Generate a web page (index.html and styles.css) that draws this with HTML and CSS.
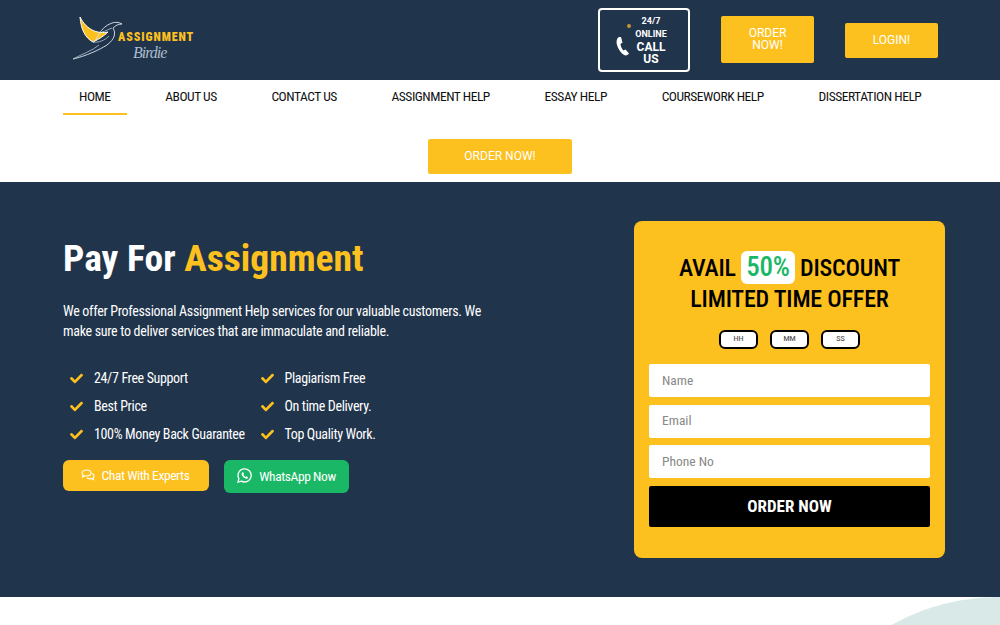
FILE: index.html
```html
<!DOCTYPE html>
<html lang="en">
<head>
    <meta charset="UTF-8">
    <title>Pay For Assignment</title>
    <link rel="stylesheet" href="styles.css">
</head>
<body>
<div class="top-bar">
    <a class="logo" href="#">
        <svg class="logo-bird" width="76" height="50" viewBox="0 0 76 50">
            <path d="M8 5C9 17 13 26 21 30C27 27 32 24 36 20C27 22 15 19 8 5Z" fill="#fdc11f" stroke="#fff" stroke-width="1"/>
            <path d="M1 47C14 44 27 38 35 33C43 27 44 21 41 16C44 13 47 12 50 12C47 10 43 10 40 11C34 13 30 17 27 22C24 28 22 31 21 30" fill="none" stroke="#dfe7ee" stroke-width="0.9"/>
            <path d="M21 30C27 31 33 28 37 24M1 47C10 42 20 39 27 33M30 20C34 19 37 17 40 16" fill="none" stroke="#b9c8d5" stroke-width="0.8"/>
        </svg>
        <span class="logo-text">ASSIGNMENT</span>
        <span class="logo-script">Birdie</span>
    </a>
    <div class="top-actions">
        <a class="call-box" href="#">
            <svg class="call-icon" width="14" height="20" viewBox="0 0 14 20">
                <path d="M3 1C1 2 0 5 1 9C2 13 5 17 8 19C10 20 12 19 13 17.500L9.500 13.500L7.500 14.500C6 13 4.500 10 4.500 8L6.500 6.500L5 1Z" fill="#fff"/>
            </svg>
            <span class="call-text">
                <span class="call-small">24/7</span>
                <span class="call-small">ONLINE</span>
                <span class="call-big">CALL<br>US</span>
            </span>
            <i class="call-dot"></i>
        </a>
        <a class="btn btn-order-top" href="#">ORDER<br>NOW!</a>
        <a class="btn btn-login" href="#">LOGIN!</a>
    </div>
</div>

<div class="nav-wrap">
    <ul class="nav">
        <li class="active"><a href="#">HOME</a></li>
        <li><a href="#">ABOUT US</a></li>
        <li><a href="#">CONTACT US</a></li>
        <li><a href="#">ASSIGNMENT HELP</a></li>
        <li><a href="#">ESSAY HELP</a></li>
        <li><a href="#">COURSEWORK HELP</a></li>
        <li><a href="#">DISSERTATION HELP</a></li>
    </ul>
    <a class="btn btn-order-nav" href="#">ORDER NOW!</a>
</div>

<div class="hero">
    <div class="hero-left">
        <h1>Pay For <span>Assignment</span></h1>
        <p class="intro">We offer Professional Assignment Help services for our valuable customers. We make sure to deliver services that are immaculate and reliable.</p>
        <ul class="checks">
            <li><svg viewBox="0 0 512 512"><path d="M173.900 439.400L7.500 273C-2.500 263-2.500 246.800 7.500 236.800L43.700 200.600C53.700 190.600 69.900 190.600 79.900 200.600L192 312.700L432.100 72.600C442.100 62.600 458.300 62.600 468.300 72.600L504.500 108.800C514.500 118.800 514.500 135 504.500 145L210.100 439.400C200.100 449.400 183.900 449.400 173.900 439.400Z"/></svg>24/7 Free Support</li>
            <li><svg viewBox="0 0 512 512"><path d="M173.900 439.400L7.500 273C-2.500 263-2.500 246.800 7.500 236.800L43.700 200.600C53.700 190.600 69.900 190.600 79.900 200.600L192 312.700L432.100 72.600C442.100 62.600 458.300 62.600 468.300 72.600L504.500 108.800C514.500 118.800 514.500 135 504.500 145L210.100 439.400C200.100 449.400 183.900 449.400 173.900 439.400Z"/></svg>Plagiarism Free</li>
            <li><svg viewBox="0 0 512 512"><path d="M173.900 439.400L7.500 273C-2.500 263-2.500 246.800 7.500 236.800L43.700 200.600C53.700 190.600 69.900 190.600 79.900 200.600L192 312.700L432.100 72.600C442.100 62.600 458.300 62.600 468.300 72.600L504.500 108.800C514.500 118.800 514.500 135 504.500 145L210.100 439.400C200.100 449.400 183.900 449.400 173.900 439.400Z"/></svg>Best Price</li>
            <li><svg viewBox="0 0 512 512"><path d="M173.900 439.400L7.500 273C-2.500 263-2.500 246.800 7.500 236.800L43.700 200.600C53.700 190.600 69.900 190.600 79.900 200.600L192 312.700L432.100 72.600C442.100 62.600 458.300 62.600 468.300 72.600L504.500 108.800C514.500 118.800 514.500 135 504.500 145L210.100 439.400C200.100 449.400 183.900 449.400 173.900 439.400Z"/></svg>On time Delivery.</li>
            <li><svg viewBox="0 0 512 512"><path d="M173.900 439.400L7.500 273C-2.500 263-2.500 246.800 7.500 236.800L43.700 200.600C53.700 190.600 69.900 190.600 79.900 200.600L192 312.700L432.100 72.600C442.100 62.600 458.300 62.600 468.300 72.600L504.500 108.800C514.500 118.800 514.500 135 504.500 145L210.100 439.400C200.100 449.400 183.900 449.400 173.900 439.400Z"/></svg>100% Money Back Guarantee</li>
            <li><svg viewBox="0 0 512 512"><path d="M173.900 439.400L7.500 273C-2.500 263-2.500 246.800 7.500 236.800L43.700 200.600C53.700 190.600 69.900 190.600 79.900 200.600L192 312.700L432.100 72.600C442.100 62.600 458.300 62.600 468.300 72.600L504.500 108.800C514.500 118.800 514.500 135 504.500 145L210.100 439.400C200.100 449.400 183.900 449.400 173.900 439.400Z"/></svg>Top Quality Work.</li>
        </ul>
        <div class="cta-row">
            <a class="cta cta-chat" href="#">
                <svg width="14" height="12" viewBox="0 0 14 12" fill="none" stroke="#fff" stroke-width="1.100">
                    <path d="M5.500 1C3 1 1 2.300 1 4C1 4.900 1.500 5.600 2.200 6.200L1.600 7.800L3.700 6.800C4.300 7 4.900 7 5.500 7C8 7 10 5.700 10 4C10 2.300 8 1 5.500 1Z"/>
                    <path d="M11 4.500C12.300 5 13.200 6 13.200 7C13.200 7.800 12.700 8.500 12 9L12.500 10.600L10.500 9.600C9 10 7 9.800 5.800 8.600"/>
                </svg>
                Chat With Experts
            </a>
            <a class="cta cta-whatsapp" href="#">
                <svg width="15" height="15" viewBox="0 0 16 16">
                    <path d="M1 15L2 11.300A7 7 0 1 1 4.700 14Z" fill="none" stroke="#fff" stroke-width="1.400"/>
                    <path d="M5.800 4.400C5 5 4.600 6 5.200 7.500C6 9.300 7.500 10.800 9.300 11.300C10.600 11.600 11.500 11 11.800 10L10.200 8.900L9.300 9.700C8.300 9.300 7.300 8.300 6.800 7.300L7.500 6.400L6.600 4.400Z" fill="#fff"/>
                </svg>
                WhatsApp Now
            </a>
        </div>
    </div>
    <div class="offer-card">
        <h2>AVAIL <span class="off">50%</span> DISCOUNT<br>LIMITED TIME OFFER</h2>
        <div class="timer">
            <span>HH</span>
            <span>MM</span>
            <span>SS</span>
        </div>
        <form class="offer-form">
            <input type="text" placeholder="Name">
            <input type="text" placeholder="Email">
            <input type="text" placeholder="Phone No">
            <button type="button">ORDER NOW</button>
        </form>
    </div>
</div>

<div class="below">
    <div class="blob"></div>
</div>
</body>
</html>
```

FILE: styles.css
```css
*{
    margin: 0;
    padding: 0;
    box-sizing: border-box;
}
html,body {
    height: 100%;
}
body{
    background-color: #ffffff;
    font-family: Roboto, sans-serif;
    font-stretch: 75%;
    overflow: hidden;
}
a{
    text-decoration: none;
}
ul{
    list-style: none;
}
.top-bar{
    height: 80px;
    background-color: #20344c;
    display: flex;
    align-items: center;
    justify-content: space-between;
    padding: 0 62px 0 72px;
}
.logo{
    position: relative;
    display: block;
    width: 125px;
    height: 62px;
    margin-top: -4px;
}
.logo-bird{
    position: absolute;
    left: 0;
    top: 5px;
}
.logo-text{
    position: absolute;
    left: 46px;
    top: 25px;
    color: #fdc11f;
    font-size: 12px;
    font-weight: 900;
    line-height: 10px;
    letter-spacing: 0.900px;
    white-space: nowrap;
}
.logo-script{
    position: absolute;
    left: 61px;
    top: 38px;
    color: #a9bccb;
    font: italic 16px/16px "Liberation Serif", serif;
    letter-spacing: -1px;
}
.top-actions{
    display: flex;
    align-items: center;
}
.btn{
    display: block;
    background-color: #fdc11f;
    color: #ffffff;
    border-radius: 2px;
    text-align: center;
    font-family: Roboto, sans-serif;
    font-stretch: 100%;
    font-size: 12px;
    font-weight: 400;
}
.call-box{
    position: relative;
    width: 92px;
    height: 64px;
    border: 2px solid #ffffff;
    border-radius: 4px;
    display: flex;
    align-items: center;
    color: #ffffff;
    font-family: Roboto, sans-serif;
    font-stretch: 100%;
    padding-left: 16px;
    margin-right: 31px;
}
.call-icon{
    margin-top: 12px;
}
.call-text{
    display: block;
    width: 40px;
    text-align: center;
    margin-left: 1px;
}
.call-small{
    display: block;
    font-size: 9px;
    font-weight: 700;
    line-height: 13px;
}
.call-big{
    display: block;
    font-size: 12px;
    font-weight: 700;
    line-height: 12px;
}
.call-dot{
    position: absolute;
    left: 27px;
    top: 14px;
    width: 4px;
    height: 4px;
    border-radius: 50%;
    background-color: #c8923a;
}
.btn-order-top{
    width: 93px;
    height: 47px;
    padding-top: 11px;
    line-height: 12px;
    margin: 0 31px 2px 0;
}
.btn-login{
    width: 93px;
    height: 35px;
    line-height: 35px;
}
.nav-wrap{
    height: 102px;
}
.nav{
    display: flex;
    gap: 22.700px;
    height: 35px;
    padding: 0 63px;
}
.nav li{
    padding: 0 16px;
    height: 35px;
    border-bottom: 2px solid transparent;
    line-height: 31px;
    white-space: nowrap;
}
.nav li a{
    color: #111111;
    font-size: 13.500px;
    letter-spacing: -0.470px;
}
.nav li.active{
    border-bottom-color: #fdc11f;
}
.btn-order-nav{
    width: 144px;
    height: 35px;
    line-height: 35px;
    margin: 24px auto 0;
}
.hero{
    height: 415px;
    background-color: #20344c;
    display: flex;
    justify-content: space-between;
    padding: 39px 55px 0 63px;
}
.hero-left{
    width: 440px;
}
.hero-left h1{
    color: #ffffff;
    font-size: 37.600px;
    line-height: 44px;
    font-weight: 700;
    margin-top: 15px;
}
.hero-left h1 span{
    color: #fdc11f;
}
.intro{
    color: #ffffff;
    font-size: 14px;
    letter-spacing: -0.300px;
    line-height: 20px;
    margin-top: 21px;
}
.checks{
    display: grid;
    grid-template-columns: 190.500px 1fr;
    margin: 23px 0 0 7px;
}
.checks li{
    display: flex;
    align-items: center;
    gap: 11px;
    color: #ffffff;
    font-size: 14px;
    letter-spacing: -0.350px;
    line-height: 28px;
    white-space: nowrap;
}
.checks svg{
    width: 13px;
    height: 13px;
    fill: #fdc11f;
}
.cta-row{
    display: flex;
    gap: 15px;
    margin-top: 12px;
}
.cta{
    display: flex;
    align-items: center;
    justify-content: center;
    gap: 7px;
    height: 31px;
    padding-bottom: 2px;
    border-radius: 6px;
    color: #ffffff;
    font-size: 13.500px;
    letter-spacing: -0.420px;
}
.cta-chat{
    width: 146px;
    padding-right: 2px;
    background-color: #fdc11f;
}
.cta-whatsapp{
    width: 125px;
    height: 33px;
    background-color: #1ab866;
}
.offer-card{
    width: 311px;
    height: 337px;
    background-color: #fdc11f;
    border-radius: 8px;
    padding: 30px 15px 0;
}
.offer-card h2{
    color: #000000;
    text-align: center;
    font-size: 24px;
    letter-spacing: -0.200px;
    line-height: 31px;
    font-weight: 500;
}
.off{
    display: inline-block;
    background-color: #ffffff;
    color: #1ab866;
    border-radius: 6px;
    padding: 0 5px;
    font-size: 27px;
    line-height: 33px;
}
.timer{
    display: flex;
    justify-content: center;
    gap: 12px;
    margin-top: 15px;
}
.timer span{
    width: 39px;
    height: 19px;
    background-color: #ffffff;
    border: 2px solid #000000;
    border-radius: 6px;
    color: #555555;
    font-family: Roboto, sans-serif;
    font-stretch: 100%;
    font-size: 7px;
    font-weight: 500;
    line-height: 15px;
    text-align: center;
}
.offer-form{
    margin-top: 15px;
    display: flex;
    flex-direction: column;
    gap: 7.500px;
}
.offer-form input{
    height: 33px;
    border: 0;
    border-radius: 2px;
    padding: 0 13px 2px;
    font-family: inherit;
    font-stretch: 75%;
    font-size: 13.500px;
    background-color: #ffffff;
}
.offer-form input::placeholder{
    color: #888888;
}
.offer-form button{
    height: 41px;
    border: 0;
    border-radius: 2px;
    background-color: #000000;
    color: #ffffff;
    font-family: inherit;
    font-stretch: 75%;
    font-size: 17px;
    font-weight: 700;
}
.below{
    position: relative;
    height: 28px;
    overflow: hidden;
}
.blob{
    position: absolute;
    left: 800px;
    top: 0;
    width: 400px;
    height: 350px;
    border-radius: 50%;
    background-color: #d9e9e8;
}
```
